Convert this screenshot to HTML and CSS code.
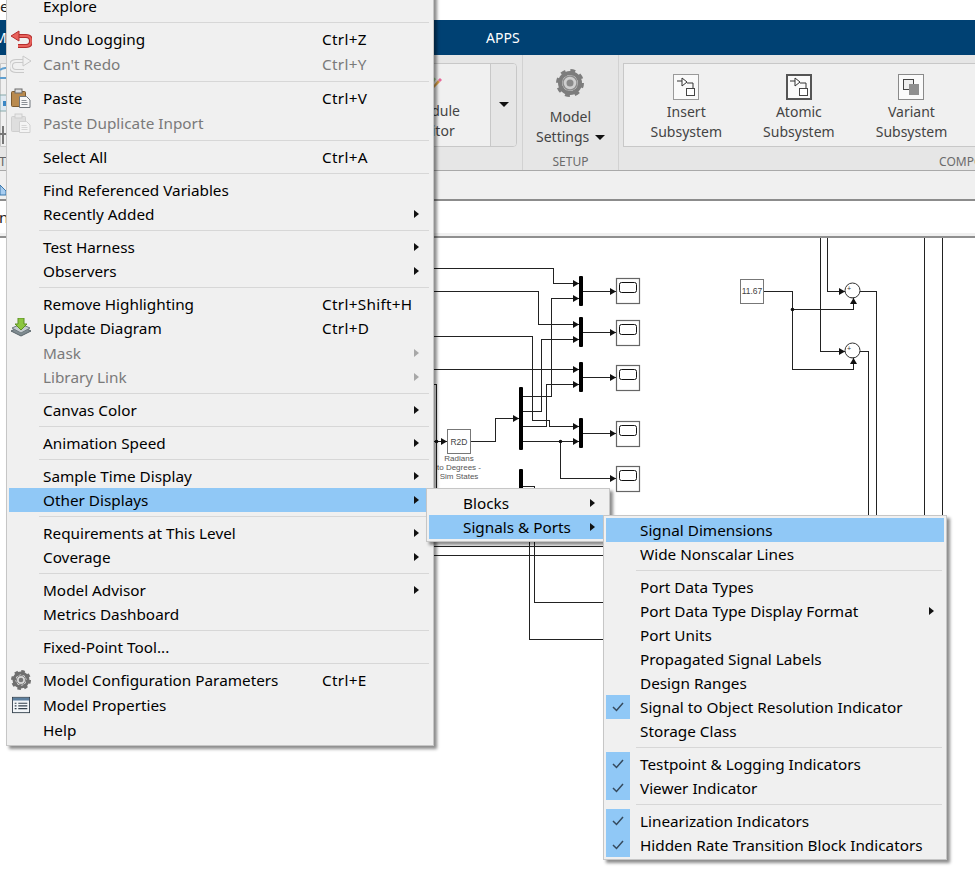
FILE: index.html
```html
<!DOCTYPE html>
<html lang="en">
<head>
    <meta charset="UTF-8">
    <meta name="viewport" content="width=device-width, initial-scale=1.0">
    <title>Simulink context menu</title>
    <link rel="stylesheet" href="styles.css">
</head>
<body>

    <div class="title-row">e</div>

    <div class="tab-bar">
        <span class="tab-cut">M</span>
        <span class="tab">APPS</span>
    </div>

    <div class="ribbon">
        <div class="group group-module">
            <div class="panel panel-module">
                <div class="module-btn">
                    <svg class="pencil" viewBox="0 0 12 20" width="12" height="20">
                        <path d="M0 18L8 8l2 2-9 9z" fill="#d9a04a"/>
                        <path d="M8 8l2-2 2 2-2 2z" fill="#e86a9a"/>
                        <path d="M0 2l6 5-2 3-4-4z" fill="#9cc98c"/>
                    </svg>
                    <span class="btn-text">Module<br>Editor</span>
                </div>
                <div class="module-drop"><i class="caret"></i></div>
            </div>
        </div>
        <div class="group group-setup">
            <div class="setup-btn">
                <svg class="gear" viewBox="0 0 28 28" width="28" height="28">
                    <circle cx="14" cy="14" r="10" fill="none" stroke="#7d7d7d" stroke-width="4"/>
                    <circle cx="14" cy="14" r="11" fill="none" stroke="#7d7d7d" stroke-width="6" stroke-dasharray="4.300 4.340"/>
                    <circle cx="14" cy="14" r="7" fill="#cfcfcf" stroke="#8d8d8d" stroke-width="1.500"/>
                    <circle cx="14" cy="14" r="3.500" fill="#8a8a8a"/>
                </svg>
                <span class="btn-text">Model<br>Settings <i class="caret caret-inline"></i></span>
            </div>
            <div class="group-label">SETUP</div>
        </div>
        <div class="group group-comp">
            <div class="panel panel-comp">
                <div class="comp-btn">
                    <svg class="comp-icon" viewBox="0 0 26 26" width="26" height="26">
                        <rect x=".5" y=".5" width="25" height="25" fill="#fafafa" stroke="#9a9a9a"/>
                        <path d="M4 7h5M14 9h6v5" fill="none" stroke="#333"/>
                        <path d="M9 4l5 4-5 4z" fill="#fff" stroke="#333"/>
                        <rect x="13.500" y="14.500" width="8" height="7" fill="#fff" stroke="#444"/>
                    </svg>
                    <span class="btn-text">Insert<br>Subsystem</span>
                </div>
                <div class="comp-btn">
                    <svg class="comp-icon" viewBox="0 0 26 26" width="26" height="26">
                        <rect x="1" y="1" width="24" height="24" fill="#fafafa" stroke="#555" stroke-width="2"/>
                        <path d="M4 7h5M14 9h6v5" fill="none" stroke="#333"/>
                        <path d="M9 4l5 4-5 4z" fill="#fff" stroke="#333"/>
                        <rect x="13.500" y="14.500" width="8" height="7" fill="#fff" stroke="#444"/>
                    </svg>
                    <span class="btn-text">Atomic<br>Subsystem</span>
                </div>
                <div class="comp-btn">
                    <svg class="comp-icon" viewBox="0 0 26 26" width="26" height="26">
                        <rect x=".5" y=".5" width="25" height="25" fill="#fafafa" stroke="#8a8a8a"/>
                        <rect x="5.500" y="5.500" width="10" height="10" fill="#eee" stroke="#444"/>
                        <rect x="11" y="10" width="10" height="11" fill="#8f8f8f"/>
                    </svg>
                    <span class="btn-text">Variant<br>Subsystem</span>
                </div>
            </div>
            <div class="group-label">COMPONENT</div>
        </div>
    </div>

    <div class="tool-row"></div>
    <div class="crumb-row"><span class="crumb-cut">nl</span></div>

    <svg class="left-bits" viewBox="0 0 7 140" width="7" height="140">
        <path d="M0 10a8 8 0 0 1 6-2M0 18h6" fill="none" stroke="#5f9fd0" stroke-width="2"/>
        <rect x="0" y="35" width="7" height="16" fill="#dfe9f2" stroke="#8aa"/>
        <rect x="3" y="41" width="3" height="5" fill="#3b87c5"/>
        <path d="M3 66v18M0 74h6" stroke="#777" stroke-width="2"/>
        <text x="-1" y="106" class="left-t">T</text>
        <path d="M0 125l6 6v4H0z" fill="#a8cdf0" stroke="#3a78ad"/>
    </svg>

    <svg class="canvas" viewBox="0 238 975 635" width="975" height="635">
        <defs>
            <marker id="tip" markerUnits="userSpaceOnUse" markerWidth="7" markerHeight="8" refX="6" refY="3.500" orient="auto">
                <path d="M0 0L6 3.500 0 7z" fill="#111"/>
            </marker>
        </defs>

        <g class="wires">
            <!-- left mux inputs -->
            <path marker-end="url(#tip)" d="M434 268.500H553.500V283.500H579"/>
            <path marker-end="url(#tip)" d="M523 396.500H551.500V298.500H579"/>
            <path marker-end="url(#tip)" d="M434 291.500H538.500V324.500H579"/>
            <path marker-end="url(#tip)" d="M523 411.500H541.500V339.500H579"/>
            <path marker-end="url(#tip)" d="M434 369.500H579"/>
            <path marker-end="url(#tip)" d="M523 426.500H546.500V384.500H579"/>
            <path marker-end="url(#tip)" d="M434 336.500H532.500V420.500H549.500V426.500H579"/>
            <path marker-end="url(#tip)" d="M523 441.500H579"/>
            <path marker-end="url(#tip)" d="M560.500 441.500V478.500H616"/>
            <!-- to scopes -->
            <path marker-end="url(#tip)" d="M583 291.500H616"/>
            <path marker-end="url(#tip)" d="M583 332.500H616"/>
            <path marker-end="url(#tip)" d="M583 377.500H616"/>
            <path marker-end="url(#tip)" d="M583 433.500H616"/>
            <!-- R2D -->
            <path marker-end="url(#tip)" d="M434 441.500H447"/>
            <path marker-end="url(#tip)" d="M471 441.500H495.500V418.500H519"/>
            <path d="M434 384.500H436.500V490"/>
            <path d="M523 486.500H534.500V602.500H606"/>
            <path d="M529.500 540V639.500H606"/>
            <path d="M434 546.500H606M434 555.500H606"/>
            <!-- right side -->
            <path marker-end="url(#tip)" d="M827.500 238V291.500H845"/>
            <path marker-end="url(#tip)" d="M820.500 238V351.500H845"/>
            <path marker-end="url(#tip)" d="M763 291.500H792.500V369.500H853.500V358"/>
            <path marker-end="url(#tip)" d="M792.500 309.500H853.500V298"/>
            <path d="M860 291.500H876.500V520"/>
            <path d="M860 351.500H868.500V520"/>
            <path d="M924.500 238V520M942.500 238V520"/>
        </g>

        <circle class="dot" cx="436.500" cy="441.500" r="1.800"/>
        <circle class="dot" cx="560.500" cy="441.500" r="1.800"/>
        <circle class="dot" cx="792.500" cy="309.500" r="1.800"/>

        <rect class="mux" x="579" y="276" width="4" height="30" rx="1"/>
        <rect class="mux" x="579" y="317" width="4" height="30" rx="1"/>
        <rect class="mux" x="579" y="362" width="4" height="30" rx="1"/>
        <rect class="mux" x="579" y="418" width="4" height="30" rx="1"/>
        <rect class="mux" x="519" y="387" width="4" height="63" rx="1"/>
        <rect class="mux" x="519" y="469" width="4" height="22" rx="1"/>

        <g class="scope"><rect x="616.500" y="278.500" width="23" height="25"/><rect class="screen" x="619.500" y="282.500" width="17" height="10" rx="2"/></g>
        <g class="scope"><rect x="616.500" y="320.500" width="23" height="25"/><rect class="screen" x="619.500" y="324.500" width="17" height="10" rx="2"/></g>
        <g class="scope"><rect x="616.500" y="365.500" width="23" height="25"/><rect class="screen" x="619.500" y="369.500" width="17" height="10" rx="2"/></g>
        <g class="scope"><rect x="616.500" y="421.500" width="23" height="25"/><rect class="screen" x="619.500" y="425.500" width="17" height="10" rx="2"/></g>
        <g class="scope"><rect x="616.500" y="466.500" width="23" height="25"/><rect class="screen" x="619.500" y="470.500" width="17" height="10" rx="2"/></g>

        <rect class="block" x="447.500" y="429.500" width="23" height="24"/>
        <text class="block-text" x="459" y="444.500">R2D</text>
        <text class="block-label" x="459" y="461">Radians</text>
        <text class="block-label" x="459" y="470">to Degrees -</text>
        <text class="block-label" x="459" y="479">Sim States</text>

        <rect class="block" x="740.500" y="279.500" width="23" height="24"/>
        <text class="block-text" x="752" y="294">11.67</text>

        <g class="sum">
            <circle cx="852.500" cy="290.500" r="7.500"/>
            <text x="847" y="291">+</text><text x="851" y="296">_</text>
        </g>
        <g class="sum">
            <circle cx="852.500" cy="350.500" r="7.500"/>
            <text x="847" y="351">+</text><text x="851" y="356">_</text>
        </g>
    </svg>

    <div class="menu menu-main">
        <div class="item">Explore</div>
        <div class="sep"></div>
        <div class="item tall has-icon">
            <span class="icon">
                <svg viewBox="0 0 22 18" width="22" height="18">
                    <path d="M6 6h10q5 0 5 5t-5 5H8" fill="none" stroke="#b52e2e" stroke-width="4"/>
                    <path d="M6 6h10q5 0 5 5t-5 5H8" fill="none" stroke="#e8625c" stroke-width="1.800"/>
                    <path d="M1 6l8-5v10z" fill="#e8625c" stroke="#b52e2e"/>
                </svg>
            </span>
            <span class="label">Undo Logging</span><span class="key">Ctrl+Z</span>
        </div>
        <div class="item tall has-icon off">
            <span class="icon">
                <svg viewBox="0 0 22 18" width="22" height="18">
                    <path d="M16 6H6q-5 0-5 5t5 5h8" fill="none" stroke="#c9c9c9" stroke-width="4"/>
                    <path d="M16 6H6q-5 0-5 5t5 5h8" fill="none" stroke="#f0f0f0" stroke-width="1.800"/>
                    <path d="M21 6l-8-5v10z" fill="#f0f0f0" stroke="#c9c9c9"/>
                </svg>
            </span>
            <span class="label">Can't Redo</span><span class="key">Ctrl+Y</span>
        </div>
        <div class="sep"></div>
        <div class="item tall has-icon">
            <span class="icon">
                <svg viewBox="0 0 20 20" width="20" height="20">
                    <rect x=".5" y="3.500" width="14" height="15" rx="1" fill="#b98a4e" stroke="#7b5a30"/>
                    <rect x="4" y="1" width="7" height="4" fill="#dcdcdc" stroke="#6b6b6b"/>
                    <path d="M8.500 8.500h7l3.500 3.500v7.500H8.500z" fill="#f7f7f7" stroke="#70767c"/>
                    <path d="M10.500 12.500h5M10.500 14.500h6M10.500 16.500h6" stroke="#8b9096"/>
                </svg>
            </span>
            <span class="label">Paste</span><span class="key">Ctrl+V</span>
        </div>
        <div class="item tall has-icon off">
            <span class="icon">
                <svg viewBox="0 0 20 20" width="20" height="20">
                    <rect x=".5" y="3.500" width="14" height="15" rx="1" fill="#dedede" stroke="#cfcfcf"/>
                    <rect x="4" y="1" width="7" height="4" fill="#eaeaea" stroke="#cdcdcd"/>
                    <path d="M8.500 8.500h7l3.500 3.500v7.500H8.500z" fill="#f4f4f4" stroke="#d0d0d0"/>
                    <path d="M10.500 12.500h5M10.500 14.500h6M10.500 16.500h6" stroke="#d5d5d5"/>
                </svg>
            </span>
            <span class="label">Paste Duplicate Inport</span>
        </div>
        <div class="sep"></div>
        <div class="item"><span class="label">Select All</span><span class="key">Ctrl+A</span></div>
        <div class="sep"></div>
        <div class="item">Find Referenced Variables</div>
        <div class="item"><span class="label">Recently Added</span><i class="arrow"></i></div>
        <div class="sep"></div>
        <div class="item"><span class="label">Test Harness</span><i class="arrow"></i></div>
        <div class="item"><span class="label">Observers</span><i class="arrow"></i></div>
        <div class="sep"></div>
        <div class="item"><span class="label">Remove Highlighting</span><span class="key">Ctrl+Shift+H</span></div>
        <div class="item tall has-icon">
            <span class="icon">
                <svg viewBox="0 0 22 20" width="22" height="20">
                    <path d="M1 13l10-5 10 5-10 5z" fill="#7f8b90" stroke="#59646a"/>
                    <path d="M2 10l9-4 9 4-9 5z" fill="#c5ccd0" stroke="#6f7a80"/>
                    <path d="M8 0h6v6h3l-6 6-6-6h3z" fill="#8cc63f" stroke="#5d8f24"/>
                </svg>
            </span>
            <span class="label">Update Diagram</span><span class="key">Ctrl+D</span>
        </div>
        <div class="item off"><span class="label">Mask</span><i class="arrow"></i></div>
        <div class="item off"><span class="label">Library Link</span><i class="arrow"></i></div>
        <div class="sep"></div>
        <div class="item"><span class="label">Canvas Color</span><i class="arrow"></i></div>
        <div class="sep"></div>
        <div class="item"><span class="label">Animation Speed</span><i class="arrow"></i></div>
        <div class="sep"></div>
        <div class="item"><span class="label">Sample Time Display</span><i class="arrow"></i></div>
        <div class="item active"><span class="label">Other Displays</span><i class="arrow"></i></div>
        <div class="sep"></div>
        <div class="item"><span class="label">Requirements at This Level</span><i class="arrow"></i></div>
        <div class="item"><span class="label">Coverage</span><i class="arrow"></i></div>
        <div class="sep"></div>
        <div class="item"><span class="label">Model Advisor</span><i class="arrow"></i></div>
        <div class="item">Metrics Dashboard</div>
        <div class="sep"></div>
        <div class="item">Fixed-Point Tool...</div>
        <div class="sep"></div>
        <div class="item tall has-icon">
            <span class="icon">
                <svg viewBox="0 0 20 20" width="20" height="20">
                    <circle cx="10" cy="10" r="7" fill="none" stroke="#6f6f6f" stroke-width="3"/>
                    <circle cx="10" cy="10" r="7.500" fill="none" stroke="#6f6f6f" stroke-width="5" stroke-dasharray="3 2.890"/>
                    <circle cx="10" cy="10" r="4.500" fill="#d8d8d8" stroke="#7b7b7b"/>
                    <circle cx="10" cy="10" r="2.300" fill="#777"/>
                </svg>
            </span>
            <span class="label">Model Configuration Parameters</span><span class="key">Ctrl+E</span>
        </div>
        <div class="item tall has-icon">
            <span class="icon">
                <svg viewBox="0 0 20 20" width="20" height="18">
                    <rect x=".5" y="1.500" width="19" height="17" fill="#f2f5f8" stroke="#33404c"/>
                    <rect x="1" y="2" width="18" height="3" fill="#5c7f9e"/>
                    <path d="M3 8h2M7 8h10M3 11h2M7 11h10M3 14h2M7 14h10" stroke="#33404c" stroke-width="1.200"/>
                </svg>
            </span>
            <span class="label">Model Properties</span>
        </div>
        <div class="item tall">Help</div>
    </div>

    <div class="menu menu-sub">
        <div class="item"><span class="label">Blocks</span><i class="arrow"></i></div>
        <div class="item active"><span class="label">Signals &amp; Ports</span><i class="arrow"></i></div>
    </div>

    <div class="menu menu-signals">
        <div class="item active">Signal Dimensions</div>
        <div class="item">Wide Nonscalar Lines</div>
        <div class="sep"></div>
        <div class="item">Port Data Types</div>
        <div class="item"><span class="label">Port Data Type Display Format</span><i class="arrow"></i></div>
        <div class="item">Port Units</div>
        <div class="item">Propagated Signal Labels</div>
        <div class="item">Design Ranges</div>
        <div class="item has-icon">
            <span class="check"><svg viewBox="0 0 12 10" width="12" height="10"><path d="M1 5l3.500 3.500L11 1"/></svg></span>
            <span class="label">Signal to Object Resolution Indicator</span>
        </div>
        <div class="item">Storage Class</div>
        <div class="sep"></div>
        <div class="item has-icon">
            <span class="check"><svg viewBox="0 0 12 10" width="12" height="10"><path d="M1 5l3.500 3.500L11 1"/></svg></span>
            <span class="label">Testpoint &amp; Logging Indicators</span>
        </div>
        <div class="item has-icon">
            <span class="check"><svg viewBox="0 0 12 10" width="12" height="10"><path d="M1 5l3.500 3.500L11 1"/></svg></span>
            <span class="label">Viewer Indicator</span>
        </div>
        <div class="sep"></div>
        <div class="item has-icon">
            <span class="check"><svg viewBox="0 0 12 10" width="12" height="10"><path d="M1 5l3.500 3.500L11 1"/></svg></span>
            <span class="label">Linearization Indicators</span>
        </div>
        <div class="item has-icon">
            <span class="check"><svg viewBox="0 0 12 10" width="12" height="10"><path d="M1 5l3.500 3.500L11 1"/></svg></span>
            <span class="label">Hidden Rate Transition Block Indicators</span>
        </div>
    </div>

</body>
</html>
```
FILE: styles.css
```css
html, body {
    margin: 0;
    height: 873px;
    overflow: hidden;
}

body {
    position: relative;
    background: #fff;
    color: #000;
    font-family: "Noto Sans", sans-serif;
    font-size: 15.3px;
}

.title-row {
    height: 20px;
    line-height: 12px;
    color: #222;
}

.tab-bar {
    height: 35px;
    display: flex;
    align-items: center;
    background: #004173;
    color: #fff;
    font-size: 14px;
}

.tab-cut {
    margin-left: -6px;
    width: 492px;
    flex: none;
}

.tab {
    flex: none;
}

/* ribbon */
.ribbon {
    height: 115px;
    display: flex;
    background: #e6e6e6;
    border-bottom: 1px solid #a9a9a9;
    color: #444;
    font-size: 14px;
    line-height: 20px;
    overflow: hidden;
}

.group {
    flex: none;
    display: flex;
    flex-direction: column;
    box-sizing: border-box;
    padding-top: 8px;
}

.group-module {
    width: 523px;
    border-right: 1px solid #d2d2d2;
}

.group-setup {
    width: 96px;
    border-right: 1px solid #d2d2d2;
    align-items: center;
    padding-top: 0;
}

.group-comp {
    width: 712px;
    padding-left: 4px;
}

.panel {
    height: 84px;
    box-sizing: border-box;
    background: #f0f0f0;
    border: 1px solid #c8c8c8;
    display: flex;
}

.panel-module {
    width: 517px;
    border-radius: 0 4px 4px 0;
}

.panel-comp {
    width: 708px;
    padding-left: 6px;
}

.module-btn {
    width: 489px;
    flex: none;
    display: flex;
    flex-direction: column;
    align-items: flex-end;
    box-sizing: border-box;
    padding: 8px 30px 0 0;
}

.pencil {
    margin: 0 18px 0 0;
}

.module-btn .btn-text {
    text-align: center;
    margin-top: 9px;
}

.module-drop {
    flex: 1;
    border-left: 1px solid #c8c8c8;
    background: #e6e6e6;
    display: flex;
    justify-content: center;
    padding-top: 38px;
    border-radius: 0 3px 3px 0;
}

.caret {
    display: block;
    width: 0;
    height: 0;
    border-left: 5px solid transparent;
    border-right: 5px solid transparent;
    border-top: 5px solid #111;
}

.caret-inline {
    display: inline-block;
    margin-left: 2px;
    vertical-align: 2px;
}

.setup-btn {
    height: 92px;
    display: flex;
    flex-direction: column;
    align-items: center;
    text-align: center;
    padding-top: 14px;
    box-sizing: border-box;
}

.setup-btn .btn-text {
    margin-top: 10px;
}

.group-label {
    height: 22px;
    line-height: 30px;
    font-size: 12px;
    color: #6b6b6b;
    text-align: center;
}

.comp-btn {
    width: 112.600px;
    flex: none;
    display: flex;
    flex-direction: column;
    align-items: center;
    text-align: center;
    padding-top: 10px;
    box-sizing: border-box;
}

.comp-icon {
    display: block;
    margin-bottom: 2px;
}

/* rows under the ribbon */
.tool-row {
    height: 28px;
    background: #f0f0f0;
    border-bottom: 2px solid #8c8c8c;
}

.crumb-row {
    height: 35px;
    background: #fff;
    border-bottom: 2px solid #8f8f8f;
    line-height: 32px;
    box-shadow: inset 0 -3px 0 #f0f0f0;
}

.crumb-cut {
    color: #222;
    margin-left: -1px;
}

.left-bits {
    position: absolute;
    left: 0;
    top: 60px;
}

.left-t {
    font-family: "Noto Sans", sans-serif;
    font-size: 13px;
    fill: #666;
}

/* block diagram */
.canvas {
    display: block;
}

.wires path {
    fill: none;
    stroke: #222;
    stroke-width: 1;
    shape-rendering: crispEdges;
}

.dot {
    fill: #111;
}

.mux {
    fill: #000;
}

.scope rect {
    fill: #fff;
    stroke: #666;
    stroke-width: 1.200;
}

.scope .screen {
    stroke: #111;
    stroke-width: 1;
}

.block {
    fill: #fff;
    stroke: #777;
}

.block-text, .block-label {
    font-family: "Liberation Sans", sans-serif;
    text-anchor: middle;
    fill: #444;
}

.block-text {
    font-size: 8.500px;
}

.block-label {
    font-size: 8px;
    fill: #555;
}

.sum circle {
    fill: #fff;
    stroke: #333;
}

.sum text {
    font-family: "Liberation Sans", sans-serif;
    font-size: 7px;
    fill: #333;
}

/* context menus */
.menu {
    position: absolute;
    box-sizing: border-box;
    background: #f0f0f0;
    border: 1px solid #c6c6c6;
    padding: 2px;
    box-shadow: 3px 3px 3px rgba(0, 0, 0, 0.45);
}

.menu-main {
    left: 6px;
    top: -9px;
    width: 428px;
}

.menu-sub {
    left: 426px;
    top: 488px;
    width: 184px;
}

.menu-signals {
    left: 603px;
    top: 515px;
    width: 344px;
}

.item {
    height: 24px;
    box-sizing: border-box;
    padding: 0 0 1px 34px;
    display: flex;
    align-items: center;
    white-space: nowrap;
}

.item.tall {
    height: 25px;
    padding-bottom: 2px;
}

.item.has-icon {
    padding-left: 0;
}

.item.active {
    background: #90c8f6;
}

.item.off {
    color: #7a7a7a;
}

.label {
    flex: 1;
}

.key {
    width: 109px;
    flex: none;
    letter-spacing: 0.3px;
}

.icon {
    width: 34px;
    flex: none;
    display: flex;
    justify-content: center;
    padding-right: 10px;
    box-sizing: border-box;
}

.check {
    width: 24px;
    height: 24px;
    margin-right: 10px;
    flex: none;
    align-self: flex-start;
    background: #90c8f6;
    display: flex;
    align-items: center;
    justify-content: center;
}

.check path {
    fill: none;
    stroke: #35495c;
    stroke-width: 1.500;
}

.arrow {
    flex: none;
    width: 0;
    height: 0;
    margin-right: 12px;
    border-top: 4px solid transparent;
    border-bottom: 4px solid transparent;
    border-left: 5px solid #111;
}

.off .arrow {
    border-left-color: #a8a8a8;
}

.sep {
    height: 1px;
    margin: 4px 2px 4px 30px;
    background: #d7d7d7;
}

.menu-signals .arrow {
    margin-right: 10px;
}
```
